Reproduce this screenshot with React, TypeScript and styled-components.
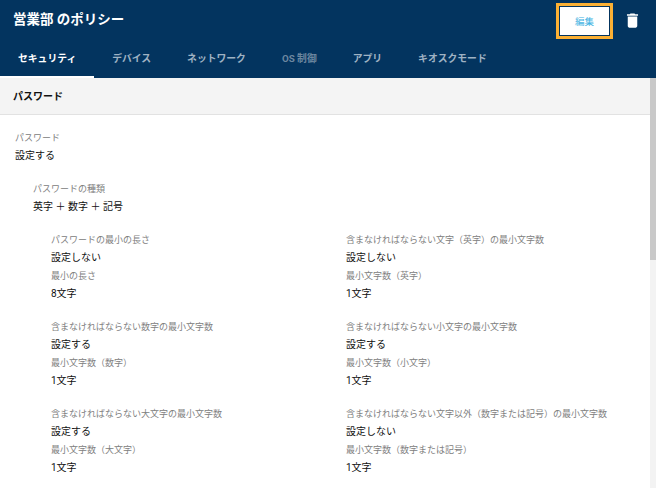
import { Fragment } from 'react';
import styled, { createGlobalStyle } from 'styled-components';

const GlobalStyle = createGlobalStyle`
html, body {
  margin: 0;
  padding: 0;
  height: 100%;
  overflow: hidden;
  background: #fff;
  font-family: Roboto, "Noto Sans CJK JP", sans-serif;
}
`;

const Page = styled.div`
  width: 656px;
  height: 488px;
  display: flex;
  flex-direction: column;
  overflow: hidden;
`;

const Header = styled.header`
  height: 78px;
  flex: none;
  background: #03345f;
  display: flex;
  flex-direction: column;
`;

const TopRow = styled.div`
  height: 48px;
  display: flex;
  align-items: flex-start;
  padding: 3px 14px 0 13px;
  box-sizing: border-box;
`;

const Title = styled.h1`
  margin: 6px 0 0;
  flex: 1;
  font-size: 13.5px;
  line-height: 20px;
  font-weight: 700;
  color: #fff;
`;

const EditFrame = styled.div`
  border: 3px solid #fbb034;
  padding: 1px;
  background: #03345f;
  margin-right: 10px;
`;

const EditButton = styled.button`
  display: block;
  width: 49px;
  height: 28px;
  padding: 0;
  border: 0;
  background: #fff;
  color: #3fb2e2;
  font-family: inherit;
  font-size: 9.5px;
`;

const Trash = styled.svg`
  width: 19px;
  height: 19px;
  margin-top: 8px;
  fill: #fff;
`;

const Tabs = styled.nav`
  height: 30px;
  display: flex;
`;

const Tab = styled.div<{ $active?: boolean; $disabled?: boolean }>`
  box-sizing: border-box;
  padding: 0 18px 8px;
  display: flex;
  align-items: center;
  justify-content: center;
  font-size: 9.8px;
  font-weight: 700;
  color: ${(p) => (p.$active ? '#fff' : p.$disabled ? '#6c87a0' : '#9fb2c3')};
  border-bottom: 2px solid ${(p) => (p.$active ? '#fff' : 'transparent')};
`;

const Body = styled.div`
  flex: 1;
  display: flex;
  min-height: 0;
`;

const Content = styled.main`
  flex: 1;
  min-width: 0;
`;

const Scrollbar = styled.div`
  width: 6px;
  flex: none;
  background: #f3f3f3;
`;

const Thumb = styled.div`
  height: 182px;
  background: #c9c9c9;
`;

const SectionHead = styled.div`
  height: 37px;
  box-sizing: border-box;
  background: #f4f4f4;
  border-bottom: 1px solid #e2e2e2;
  padding: 0 0 1px 13px;
  display: flex;
  align-items: center;
  font-size: 10px;
  font-weight: 700;
  color: #111;
`;

const Label = styled.div`
  font-size: 9px;
  line-height: 18px;
  color: #808080;
`;

const Value = styled.div`
  font-size: 10px;
  line-height: 18px;
  color: #111;
`;

const Block = styled.div<{ $indent: number }>`
  padding-left: ${(p) => p.$indent}px;
`;

const Top = styled.div`
  padding-top: 14px;
  display: flex;
  flex-direction: column;
  gap: 15px;
`;

const Grid = styled.div`
  display: grid;
  grid-template-columns: 295px 1fr;
  row-gap: 15px;
  padding: 15px 0 0 51px;
`;

const rows = [
  ['パスワードの最小の長さ', '設定しない', '最小の長さ', '8文字'],
  ['含まなければならない文字（英字）の最小文字数', '設定しない', '最小文字数（英字）', '1文字'],
  ['含まなければならない数字の最小文字数', '設定する', '最小文字数（数字）', '1文字'],
  ['含まなければならない小文字の最小文字数', '設定する', '最小文字数（小文字）', '1文字'],
  ['含まなければならない大文字の最小文字数', '設定する', '最小文字数（大文字）', '1文字'],
  ['含まなければならない文字以外（数字または記号）の最小文字数', '設定しない', '最小文字数（数字または記号）', '1文字'],
];

export default function App() {
  return (
    <Page>
      <GlobalStyle />
      <Header>
        <TopRow>
          <Title>営業部 のポリシー</Title>
          <EditFrame>
            <EditButton>編集</EditButton>
          </EditFrame>
          <Trash viewBox="0 0 24 24">
            <path d="M6 19c0 1.1.9 2 2 2h8c1.1 0 2-.9 2-2V7H6v12zM19 4h-3.5l-1-1h-5l-1 1H5v2h14V4z" />
          </Trash>
        </TopRow>
        <Tabs>
          <Tab $active>セキュリティ</Tab>
          <Tab>デバイス</Tab>
          <Tab>ネットワーク</Tab>
          <Tab $disabled>OS 制御</Tab>
          <Tab>アプリ</Tab>
          <Tab>キオスクモード</Tab>
        </Tabs>
      </Header>
      <Body>
        <Content>
          <SectionHead>パスワード</SectionHead>
          <Top>
            <Block $indent={15}>
              <Label>パスワード</Label>
              <Value>設定する</Value>
            </Block>
            <Block $indent={33}>
              <Label>パスワードの種類</Label>
              <Value>英字 ＋ 数字 ＋ 記号</Value>
            </Block>
          </Top>
          <Grid>
            {rows.map((r) => (
              <div key={r[0]}>
                {r.map((t, i) => (
                  <Fragment key={i}>
                    {i % 2 === 0 ? <Label>{t}</Label> : <Value>{t}</Value>}
                  </Fragment>
                ))}
              </div>
            ))}
          </Grid>
        </Content>
        <Scrollbar>
          <Thumb />
        </Scrollbar>
      </Body>
    </Page>
  );
}
